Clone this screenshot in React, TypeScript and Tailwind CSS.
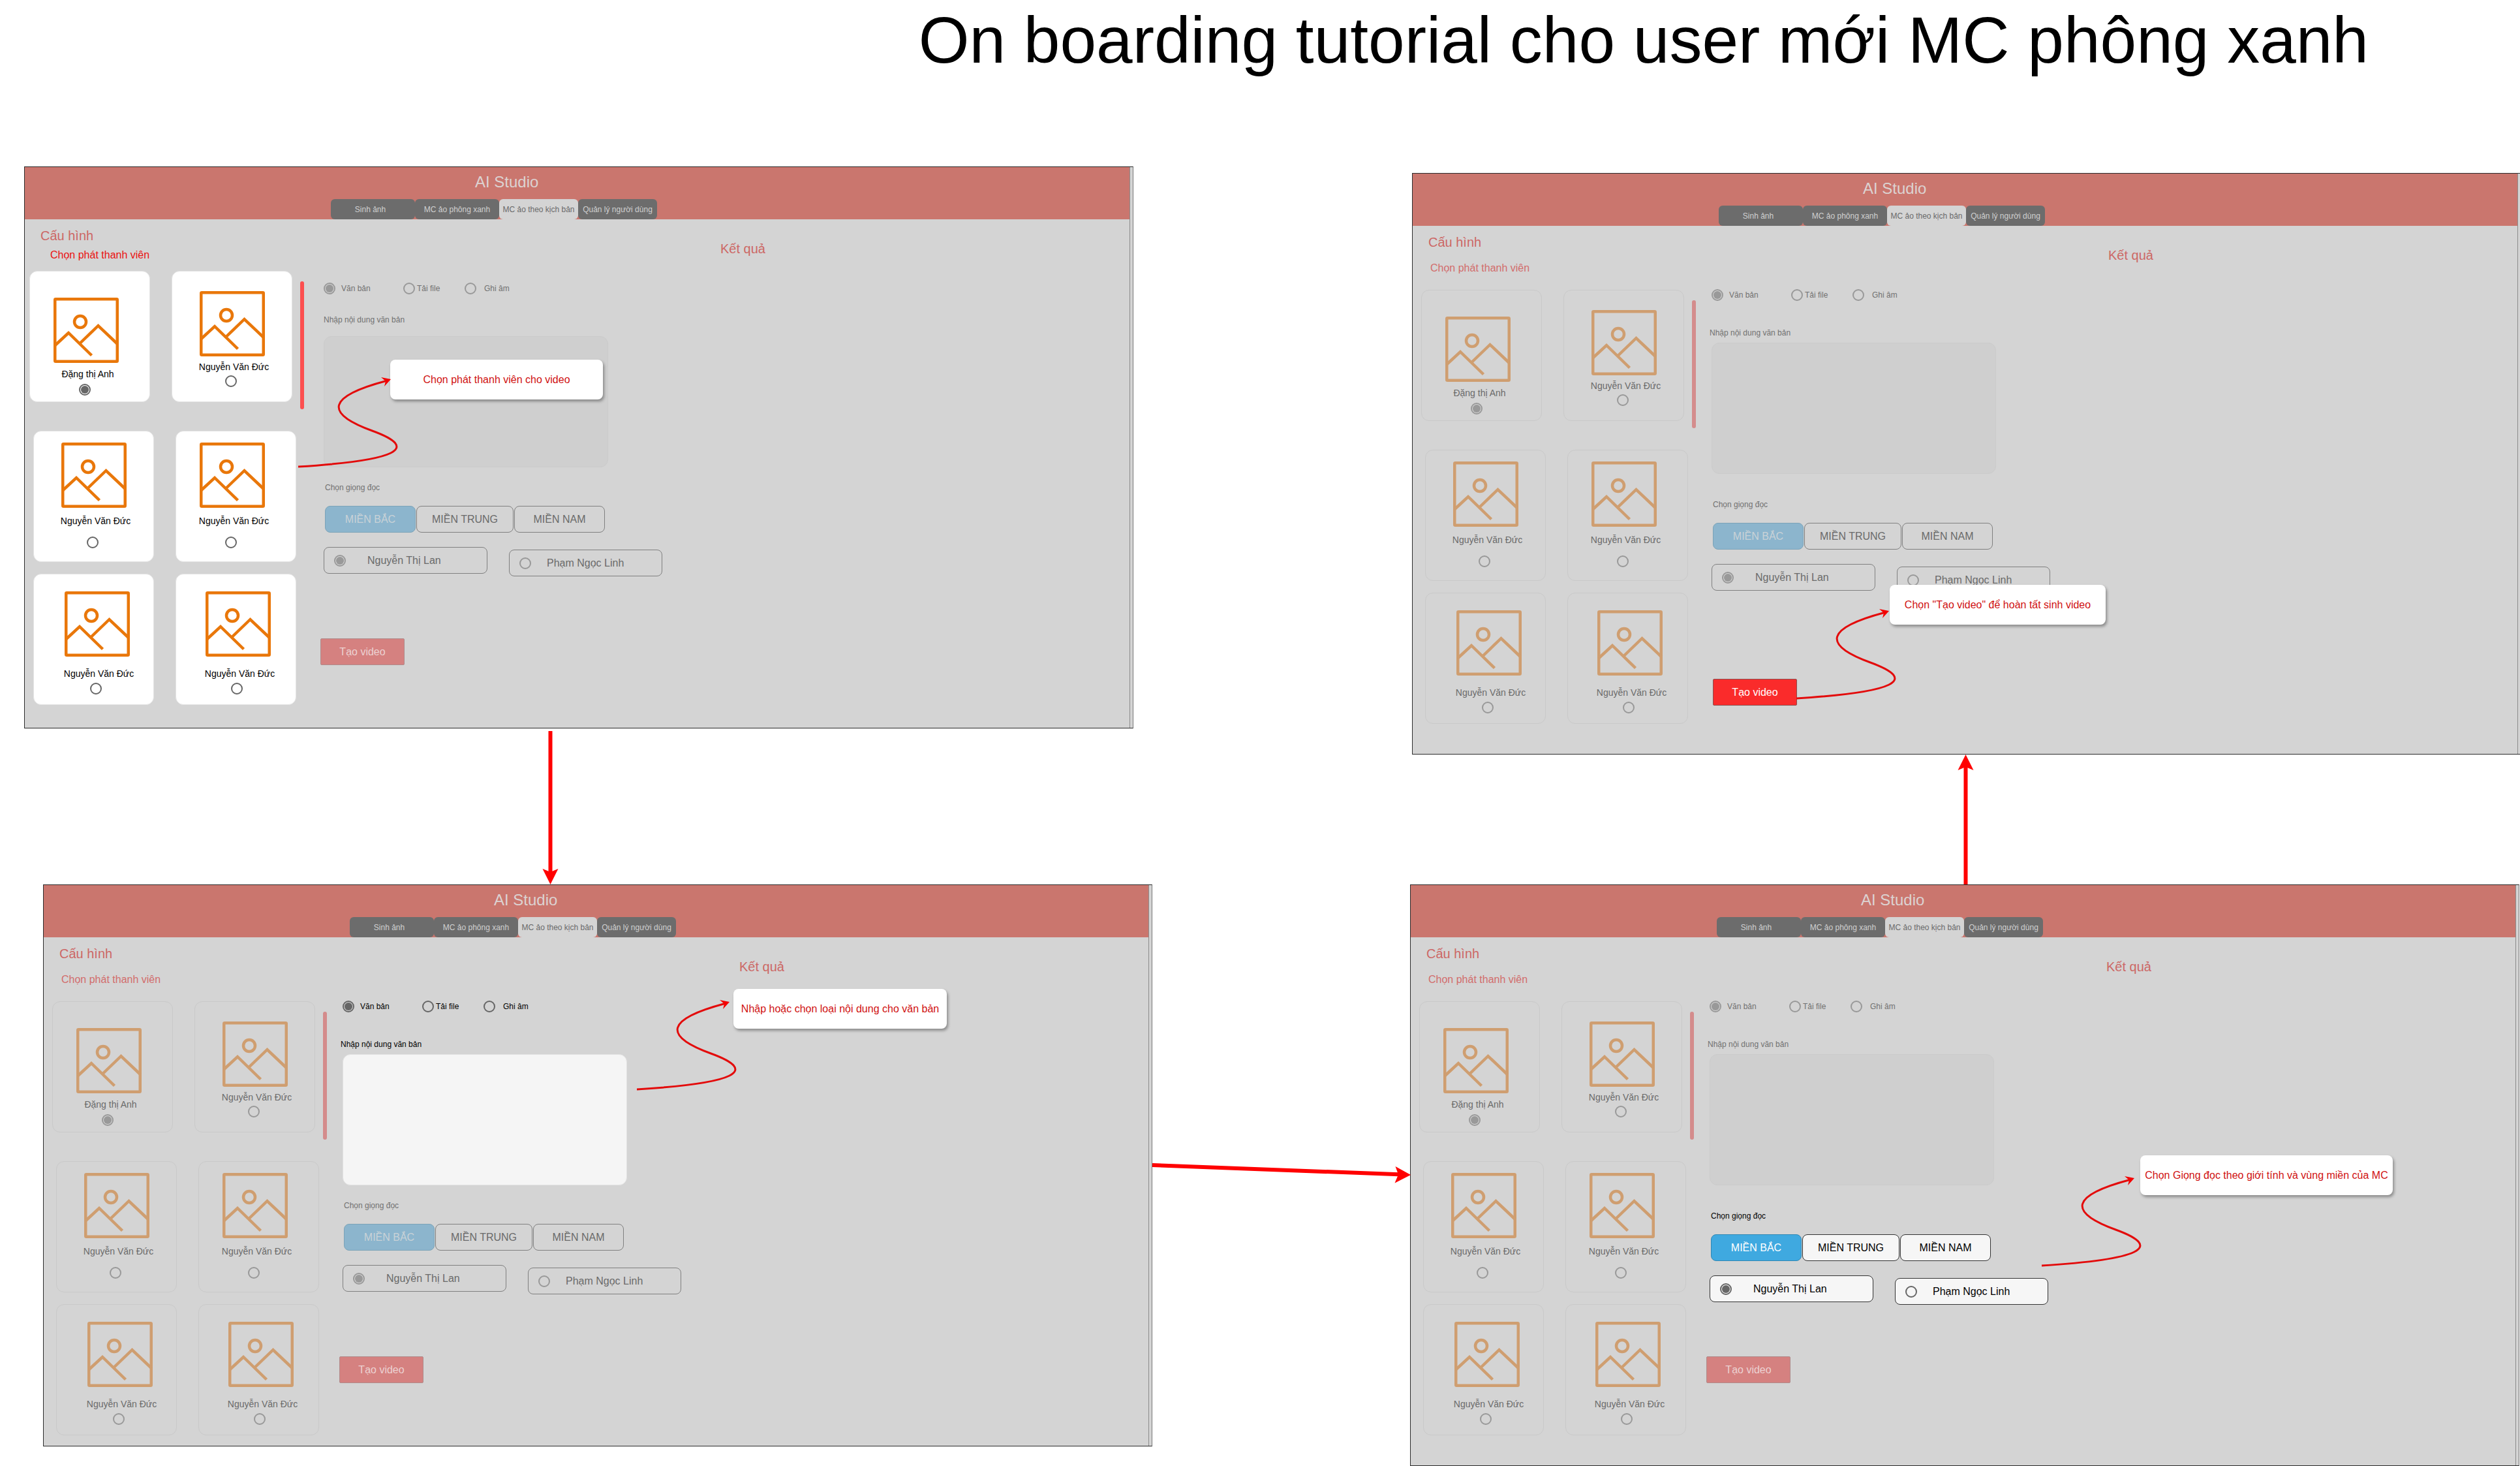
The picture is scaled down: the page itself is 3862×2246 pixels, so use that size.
import React from "react";

type Focus = "presenter" | "content" | "voice" | "create";

const cx = (...parts: (string | false | undefined)[]) => parts.filter(Boolean).join(" ");

function Radio({ name, lit, checked, className }: { name: string; lit: boolean; checked?: boolean; className?: string }) {
  return (
    <input
      type="radio"
      name={name}
      defaultChecked={checked}
      className={cx(
        "size-[18px] shrink-0 appearance-none rounded-full border-2 bg-clip-content p-px",
        lit ? "border-[#666666] checked:bg-[#666666]" : "border-[#999999] checked:bg-[#999999]",
        className,
      )}
    />
  );
}

function ImageIcon({ lit }: { lit: boolean }) {
  return (
    <svg
      viewBox="0 0 100 100"
      aria-hidden="true"
      className={cx("size-[100px] shrink-0", lit ? "text-[#e9770a]" : "text-[#cf9e70]")}
      fill="none"
      stroke="currentColor"
      strokeWidth="4.5"
    >
      <rect x="2.25" y="2.25" width="95.5" height="95.5" rx="1" />
      <circle cx="41" cy="37" r="9" />
      <path d="M2.5 73L23 54L58.5 88.5M41 69.5L68.5 43L98 71" />
    </svg>
  );
}

type Person = { name: string; box: string; label: string; radio: string; checked?: boolean };

const rows: { className: string; people: Person[] }[] = [
  {
    className: "",
    people: [
      { name: "Đặng thị Anh", box: "pt-10 pr-3", label: "mt-[7px]", radio: "mt-[5px]", checked: true },
      { name: "Nguyễn Văn Đức", box: "pt-[30px]", label: "mt-[6px]", radio: "mt-[3px]" },
    ],
  },
  {
    className: "mt-11 ml-[6px]",
    people: [
      { name: "Nguyễn Văn Đức", box: "pt-[17px]", label: "mt-[10px]", radio: "mt-[14px]" },
      { name: "Nguyễn Văn Đức", box: "pt-[17px] pr-3", label: "mt-[10px]", radio: "mt-[14px]" },
    ],
  },
  {
    className: "mt-[18px] ml-[6px]",
    people: [
      { name: "Nguyễn Văn Đức", box: "pt-[26px] pl-[10px]", label: "mt-[16px]", radio: "mt-[4px]" },
      { name: "Nguyễn Văn Đức", box: "pt-[26px] pl-[6px]", label: "mt-[16px]", radio: "mt-[4px]" },
    ],
  },
];

function PersonCard({ person, lit, group }: { person: Person; lit: boolean; group: string }) {
  return (
    <label
      className={cx(
        "flex h-[201px] w-[185px] flex-col items-center rounded-xl border",
        lit ? "border-[#e4e4e4] bg-white text-black" : "border-[#c9c9c9] text-[#6a6a6a]",
        person.box,
      )}
    >
      <ImageIcon lit={lit} />
      <span className={cx("pl-[6px] text-sm leading-5 whitespace-nowrap", person.label)}>{person.name}</span>
      <Radio name={group} lit={lit} checked={person.checked} className={cx("mr-1", person.radio)} />
    </label>
  );
}

const tabs = [
  { label: "Sinh ảnh", width: "w-[129px] pr-2" },
  { label: "MC ảo phông xanh", width: "w-[129px]" },
  { label: "MC ảo theo kịch bản", width: "w-[121px]" },
  { label: "Quản lý người dùng", width: "w-[121px]" },
];

const regions = [
  { label: "MIỀN BẮC", width: "w-[139px]" },
  { label: "MIỀN TRUNG", width: "w-[149px]" },
  { label: "MIỀN NAM", width: "w-[139px]" },
];

const spacing: Record<Focus, { voice: string; create: string }> = {
  presenter: { voice: "mt-[21px]", create: "mt-[95px] ml-0" },
  content: { voice: "mt-[21px]", create: "mt-[95px] ml-0" },
  voice: { voice: "mt-[37px]", create: "mt-[79px] ml-0" },
  create: { voice: "mt-[37px]", create: "mt-[131px] ml-[7px]" },
};

function Screen({ id, focus, className }: { id: string; focus: Focus; className: string }) {
  const presenter = focus === "presenter";
  const content = focus === "content";
  const voice = focus === "voice";
  const create = focus === "create";
  const contentText = content ? "text-black" : "text-[#717171]";
  const voiceText = voice ? "text-black" : "text-[#6a6a6a]";
  const voiceBox = voice ? "border-[#333333] bg-[#f6f6f6]" : "border-[#808080]";

  return (
    <section className={cx("absolute w-[1700px] border border-[#2b2b2b] border-r-[#777777] bg-[#d4d4d4]", className)}>
      <div className="mr-1 flex h-full flex-col border-r border-[#8c8c8c]">
        <header className="flex h-20 flex-col bg-[#ca766e]">
          <h2 className="h-[49px] pl-[690px] text-2xl leading-[46px] text-[#dcd3d2]">AI Studio</h2>
          <nav className="flex h-[31px] pl-[469px]">
            {tabs.map((tab, i) => (
              <button
                key={tab.label}
                type="button"
                className={cx(
                  "rounded-md text-center text-xs whitespace-nowrap",
                  tab.width,
                  i === 2 ? "bg-[#d4d4d4] text-[#6a6a6a]" : "bg-[#6c6c6c] text-[#d0d0d0]",
                )}
              >
                {tab.label}
              </button>
            ))}
          </nav>
        </header>

        <div className="flex flex-1">
          <div className="w-[453px] shrink-0 pt-[13px]">
            <h3 className="pl-[24px] text-xl leading-6 text-[#cc6765]">Cấu hình</h3>
            <h4
              className={cx(
                "text-base leading-5",
                presenter ? "mt-2 pl-[39px] text-[#ea1010]" : "mt-[18px] pl-[27px] text-[#d26c6c]",
              )}
            >
              Chọn phát thanh viên
            </h4>
            <div className={cx("flex items-start gap-[6px]", presenter ? "mt-[14px] pl-[7px]" : "mt-[23px] pl-[13px]")}>
              <div>
                {rows.map((row, r) => (
                  <div key={r} className={cx("flex gap-[33px]", row.className)}>
                    {row.people.map((person, i) => (
                      <PersonCard key={i} person={person} lit={presenter} group={id + "-presenter"} />
                    ))}
                  </div>
                ))}
              </div>
              <div className={cx("mt-4 h-[196px] w-[6px] rounded-full", presenter ? "bg-[#fc4f4f]" : "bg-[#d48c8c]")} />
            </div>
          </div>

          <div className="flex w-[613px] shrink-0 flex-col items-start pt-24">
            <div className={cx("flex h-5 pl-[5px] text-xs", contentText)}>
              <label className="flex w-[122px] items-center gap-[9px]">
                <Radio name={id + "-kind"} lit={content} checked />
                Văn bản
              </label>
              <label className="flex w-[94px] items-center gap-[3px]">
                <Radio name={id + "-kind"} lit={content} />
                Tải file
              </label>
              <label className="flex items-center gap-[12px]">
                <Radio name={id + "-kind"} lit={content} />
                Ghi âm
              </label>
            </div>
            <label
              htmlFor={id + "-text"}
              className={cx("text-xs leading-5", contentText, presenter ? "mt-7 mb-[15px] pl-[5px]" : "mt-[38px] mb-[5px] pl-[2px]")}
            >
              Nhập nội dung văn bản
            </label>
            <textarea
              id={id + "-text"}
              className={cx(
                "ml-[5px] block h-[201px] w-[436px] resize-none rounded-xl border",
                content ? "border-[#e2e2e2] bg-[#f5f5f5]" : "border-[#cbcbcb] bg-[#cfcfcf]",
              )}
            />
            <p className={cx("pl-[7px] text-xs leading-5", voice ? "text-black" : "text-[#717171]", spacing[focus].voice)}>Chọn giọng đọc</p>
            <div className="mt-[18px] ml-[7px] flex gap-px">
              {regions.map((region, i) => (
                <button
                  key={region.label}
                  type="button"
                  className={cx(
                    "h-[41px] rounded-lg border text-base whitespace-nowrap",
                    region.width,
                    i > 0 && voiceBox,
                    i > 0 && voiceText,
                    i === 0 && (voice ? "border-[#2f87b4] bg-[#3fa9e0] text-white" : "border-[#7ba3b8] bg-[#8cb5cd] text-[#c9d2d7]"),
                  )}
                >
                  {region.label}
                </button>
              ))}
            </div>
            <div className={cx("mt-[22px] ml-[5px] flex items-start gap-[33px] text-base", voiceText)}>
              <label className={cx("flex h-[41px] w-[251px] items-center gap-[33px] rounded-lg border pl-[15px]", voiceBox)}>
                <Radio name={id + "-voice"} lit={voice} checked />
                Nguyễn Thị Lan
              </label>
              <label className={cx("mt-1 flex h-[41px] w-[235px] items-center gap-6 rounded-lg border pl-[15px]", voiceBox)}>
                <Radio name={id + "-voice"} lit={voice} />
                Phạm Ngọc Linh
              </label>
            </div>
            <button
              type="button"
              className={cx(
                "h-[41px] w-[129px] rounded-[2px] border text-base",
                create ? "border-[#8c5050] bg-[#fa2b2b] text-white" : "border-[#b08a8a] bg-[#d58180] text-[#ecd2d2]",
                spacing[focus].create,
              )}
            >
              Tạo video
            </button>
          </div>

          <h3 className="pt-[33px] text-xl leading-6 text-[#cc6765]">Kết quả</h3>
        </div>
      </div>
    </section>
  );
}

function Callout({ text, className }: { text: string; className: string }) {
  return (
    <p
      className={cx(
        "absolute flex h-[61px] items-center justify-center rounded-lg bg-white text-base whitespace-nowrap text-[#d01010] shadow-[2px_3px_4px_rgba(0,0,0,0.35)]",
        className,
      )}
    >
      {text}
    </p>
  );
}

function Squiggle({ className }: { className: string }) {
  return (
    <svg viewBox="0 0 160 144" aria-hidden="true" className={cx("pointer-events-none absolute h-[144px] w-[160px]", className)}>
      <path d="M0 139Q226 125 113.5 84Q1 43 135 7.5" fill="none" stroke="#e30b0b" strokeWidth="3" />
      <path d="M142 5L127 2L134 8L132 16Z" fill="#f40000" />
    </svg>
  );
}

function Connectors() {
  return (
    <svg viewBox="0 0 2220 700" aria-hidden="true" className="pointer-events-none absolute top-[1120px] left-[820px] h-[700px] w-[2220px]" fill="#ff0000" stroke="#ff0000">
      <path d="M23.5 0V220M946 665L1324 679.3M2192.5 235V52" strokeWidth="6" />
      <path d="M23.5 235L11.5 211L23.5 216L35.5 211ZM1342 680L1317.500 692.500L1323 679.500L1318.500 667ZM2192.500 36L2180.500 60L2192.500 55L2204.500 60Z" stroke="none" />
    </svg>
  );
}

export default function App() {
  return (
    <main className="relative min-h-screen w-full overflow-hidden bg-white font-['Liberation_Sans',Arial,sans-serif] text-black">
      <h1 className="pt-[4px] pr-[232px] text-right text-[100px] leading-[115px] whitespace-nowrap">On boarding tutorial cho user mới MC phông xanh</h1>

      <Screen id="s1" focus="presenter" className="top-[255px] left-[37px] h-[861px]" />
      <Screen id="s2" focus="content" className="top-[1355px] left-[66px] h-[861px]" />
      <Screen id="s3" focus="voice" className="top-[1355px] left-[2161px] h-[891px]" />
      <Screen id="s4" focus="create" className="top-[265px] left-[2164px] h-[891px]" />

      <Callout text="Chọn phát thanh viên cho video" className="top-[551px] left-[598px] w-[326px]" />
      <Callout text="Nhập hoặc chọn loại nội dung cho văn bản" className="top-[1515px] left-[1124px] w-[327px]" />
      <Callout text="Chọn Giọng đọc theo giới tính và vùng miền của MC" className="top-[1770px] left-[3280px] w-[387px]" />
      <Callout text="Chọn &quot;Tạo video&quot; để hoàn tất sinh video" className="top-[896px] left-[2896px] w-[331px]" />

      <Squiggle className="top-[576px] left-[457px]" />
      <Squiggle className="top-[1530px] left-[976px]" />
      <Squiggle className="top-[1800px] left-[3129px]" />
      <Squiggle className="top-[931px] left-[2753px]" />

      <Connectors />
    </main>
  );
}
